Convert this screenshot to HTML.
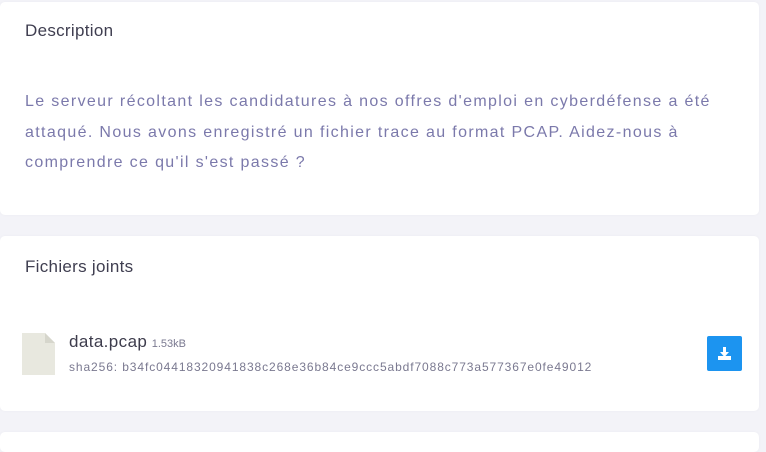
<!DOCTYPE html>
<html><head><meta charset="utf-8"><style>
html,body{margin:0;padding:0;background:#f3f3f8;width:766px;height:439px;overflow:hidden;font-family:"Liberation Sans",sans-serif}
.card{position:absolute;left:0;width:759px;background:#fff;border-radius:5px;box-shadow:0 0 3px rgba(0,0,0,0.03)}
h3{position:absolute;left:25px;margin:0;font-size:17px;font-weight:normal;color:#3f3e50;letter-spacing:0.3px}
.body{position:absolute;left:25px;top:85px;color:#7b79ab;font-size:16px;line-height:30.5px;letter-spacing:1.35px;white-space:nowrap}
</style></head><body>
<div class="card" style="top:2px;height:213px">
 <h3 style="top:19px">Description</h3>
 <div class="body">Le serveur récoltant les candidatures à nos offres d'emploi en cyberdéfense a été<br>attaqué. Nous avons enregistré un fichier trace au format PCAP. Aidez-nous à<br>comprendre ce qu'il s'est passé ?</div>
</div>
<div class="card" style="top:236px;height:175px">
 <h3 style="top:21px">Fichiers joints</h3>
 <svg style="position:absolute;left:22px;top:97px" width="33" height="42" viewBox="0 0 33 42"><path d="M0 0H23L33 10V42H0Z" fill="#e8e8df"/><path d="M23 0L33 10H23Z" fill="#d6d6cc"/></svg>
 <div style="position:absolute;left:69px;top:96px;white-space:nowrap"><span style="font-size:17px;color:#3d3c4c;letter-spacing:0.4px">data.pcap</span> <span style="font-size:11px;color:#7a7990">1.53kB</span></div>
 <div style="position:absolute;left:69px;top:124px;font-size:12px;color:#7a7990;white-space:nowrap;letter-spacing:0.9px">sha256: b34fc04418320941838c268e36b84ce9ccc5abdf7088c773a577367e0fe49012</div>
 <div style="position:absolute;left:707px;top:100px;width:35px;height:35px;background:#1c94f0;border-radius:2px">
  <svg width="35" height="35" viewBox="0 0 35 35"><path d="M16 11h3v5h3l-4.5 5-4.5-5h3z" fill="#fff"/><rect x="11" y="20" width="13" height="4" fill="#fff"/></svg>
 </div>
</div>
<div class="card" style="top:432px;height:20px"></div>
</body></html>
